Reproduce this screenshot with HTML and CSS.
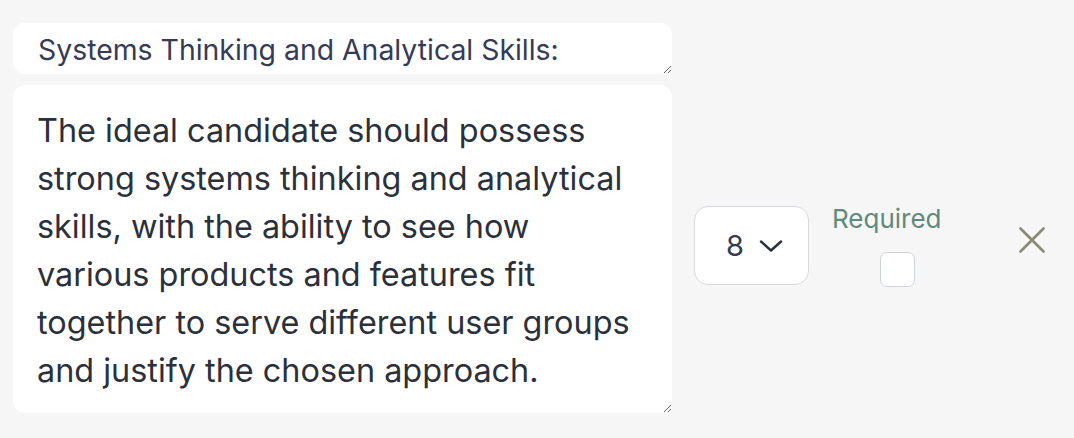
FILE: index.html
```html
<!DOCTYPE html>
<html lang="en">
<head>
<meta charset="utf-8">
<link rel="stylesheet" href="styles.css">
</head>
<body>
<div class="page">
  <textarea class="title-input">Systems Thinking and Analytical Skills:</textarea>
  <div class="row">
    <textarea class="desc-input">The ideal candidate should possess strong systems thinking and analytical skills, with the ability to see how various products and features fit together to serve different user groups and justify the chosen approach.</textarea>
    <div class="select">
      <span class="select-value">8</span>
      <svg class="chev" width="24" height="14" viewBox="0 0 24 14"><path d="M2 2.5 L12 11.5 L22 2.5" fill="none" stroke="#2b303b" stroke-width="2.4" stroke-linecap="round" stroke-linejoin="round"/></svg>
    </div>
    <div class="required">
      <span class="required-label">Required</span>
      <span class="checkbox"></span>
    </div>
    <svg class="close" width="26" height="26" viewBox="0 0 26 26"><path d="M1.5 1.5 L24.5 24.5 M24.5 1.5 L1.5 24.5" stroke="#8a8872" stroke-width="2.6" stroke-linecap="round"/></svg>
  </div>
</div>
</body>
</html>
```

FILE: styles.css
```css
html, body {
  margin: 0;
  padding: 0;
  background: #f6f6f6;
}
.page {
  padding: 23px 0 0 13px;
  display: flex;
  flex-direction: column;
  gap: 11px;
  font-family: Inter, "Noto Sans", sans-serif;
}
textarea {
  display: block;
  box-sizing: border-box;
  border: none;
  outline: none;
  background: #ffffff;
  border-radius: 12px;
  font-family: Inter, "Noto Sans", sans-serif;
  margin: 0;
  overflow: hidden;
}
.title-input {
  width: 659px;
  height: 51px;
  padding: 11px 25px 0;
  font-size: 28.4px;
  line-height: 32px;
  color: #363b55;
}
.row {
  display: flex;
  align-items: center;
}
.desc-input {
  width: 659px;
  height: 328px;
  padding: 22px 24px 0;
  font-size: 32.4px;
  line-height: 48px;
  color: #2b303b;
}
.select {
  margin-left: 22px;
  width: 115px;
  height: 79px;
  box-sizing: border-box;
  border: 1.5px solid #d6d9de;
  border-radius: 14px;
  background: #ffffff;
  display: flex;
  align-items: center;
  justify-content: center;
  gap: 15px;
  margin-top: -7px;
  padding-left: 6px;
}
.select-value {
  font-size: 29px;
  color: #363b55;
}
.chev {
  display: block;
}
.required {
  margin-left: 23px;
  display: flex;
  flex-direction: column;
  align-items: flex-start;
  gap: 18.5px;
  margin-top: -7.5px;
}
.required-label {
  font-size: 26px;
  color: #5f8a7c;
  line-height: 30px;
}
.checkbox {
  margin-left: 48px;
  width: 35px;
  height: 35px;
  box-sizing: border-box;
  border: 1.5px solid #cfd3da;
  border-radius: 7px;
  background: #ffffff;
}
.close {
  margin-left: 77px;
  margin-top: -18px;
}
```
